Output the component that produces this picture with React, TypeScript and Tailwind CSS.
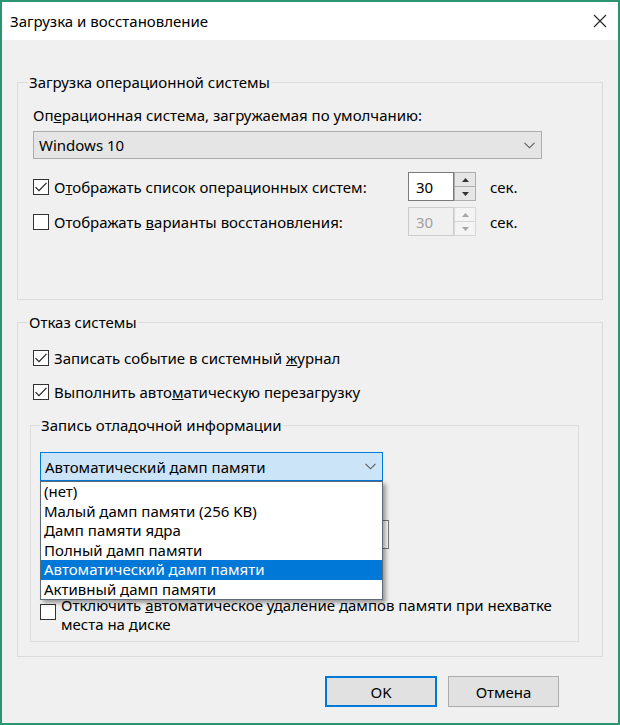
import { ReactNode } from 'react'

const font = { fontFamily: '"Noto Sans", "Open Sans", sans-serif' }

function Chevron() {
  return (
    <svg width="11" height="7" viewBox="0 0 11 7" className="shrink-0">
      <path d="M0.5 0.8 L5.5 5.8 L10.5 0.8" fill="none" stroke="#5a5a5a" strokeWidth="1.1" />
    </svg>
  )
}

function Checkbox({ checked }: { checked?: boolean }) {
  return (
    <span className="w-[16px] h-[16px] shrink-0 border border-[#333] bg-white flex items-center justify-center">
      {checked && (
        <svg width="14" height="14" viewBox="0 0 14 14">
          <path d="M1.5 7.2 L5 10.7 L12.5 2.8" fill="none" stroke="#222" strokeWidth="1.2" />
        </svg>
      )}
    </span>
  )
}

function Spinner({ disabled }: { disabled?: boolean }) {
  const arrow = disabled ? '#a6a6a6' : '#333'
  return (
    <div className="flex h-[29px]">
      <div
        className={
          disabled
            ? 'w-[46px] border border-[#cccccc] bg-[#f0f0f0] text-[#a0a0a0] pl-[7px] flex items-center'
            : 'w-[46px] border border-[#7a7a7a] bg-white text-black pl-[7px] flex items-center'
        }
      >
        30
      </div>
      <div className="w-[22px] flex flex-col">
        <div
          className={
            disabled
              ? 'flex-1 border border-[#d6d6d6] border-b-0 flex items-center justify-center bg-[#f4f4f4]'
              : 'flex-1 border border-[#adadad] border-b-0 flex items-center justify-center bg-[#e6e6e6]'
          }
        >
          <svg width="7" height="4" viewBox="0 0 7 4">
            <path d="M0 4 L3.5 0 L7 4 Z" fill={arrow} />
          </svg>
        </div>
        <div
          className={
            disabled
              ? 'flex-1 border border-[#d6d6d6] flex items-center justify-center bg-[#f4f4f4]'
              : 'flex-1 border border-[#adadad] flex items-center justify-center bg-[#e6e6e6]'
          }
        >
          <svg width="7" height="4" viewBox="0 0 7 4">
            <path d="M0 0 L3.5 4 L7 0 Z" fill={arrow} />
          </svg>
        </div>
      </div>
    </div>
  )
}

function CheckRow({ checked, children }: { checked?: boolean; children: ReactNode }) {
  return (
    <div className="flex items-center gap-[5px] h-[20px]">
      <Checkbox checked={checked} />
      <span>{children}</span>
    </div>
  )
}

const dumpOptions = [
  '(нет)',
  'Малый дамп памяти (256 KB)',
  'Дамп памяти ядра',
  'Полный дамп памяти',
  'Автоматический дамп памяти',
  'Активный дамп памяти',
]

export default function App() {
  return (
    <div
      style={font}
      className="w-[620px] h-[725px] border-2 border-[#2a9570] bg-[#f0f0f0] flex flex-col text-[15px] leading-[20px] text-black overflow-hidden"
    >
      <div className="h-[38px] bg-white flex items-center justify-between pl-[8px] pr-[11px] shrink-0">
        <span className="text-[15px]">Загрузка и восстановление</span>
        <svg width="14" height="14" viewBox="0 0 14 14">
          <path d="M1 1 L13 13 M13 1 L1 13" stroke="#222" strokeWidth="1.1" />
        </svg>
      </div>

      <div className="flex flex-col px-[15px]">
        <fieldset className="mt-[32px] border border-[#dcdcdc] pl-[10px] pr-[16px] pb-[63px]">
          <legend className="px-[1px]">Загрузка операционной системы</legend>
          <div className="pl-[5px]">
            <div className="mt-[13px]">
              Оп<u>е</u>рационная система, загружаемая по умолчанию:
            </div>
            <div className="mt-[6px] w-[509px] h-[28px] border border-[#adadad] bg-[#e5e5e5] flex items-center justify-between pl-[5px] pr-[6px]">
              <span>Windows 10</span>
              <Chevron />
            </div>
            <div className="mt-[13px] flex items-center">
              <div className="w-[375px]">
                <CheckRow checked>
                  О<u>т</u>ображать список операционных систем:
                </CheckRow>
              </div>
              <Spinner />
              <span className="ml-[14px]">сек.</span>
            </div>
            <div className="mt-[6px] flex items-center">
              <div className="w-[375px]">
                <CheckRow>
                  Отображать <u>в</u>арианты восстановления:
                </CheckRow>
              </div>
              <Spinner disabled />
              <span className="ml-[14px]">сек.</span>
            </div>
          </div>
        </fieldset>

        <fieldset className="mt-[12px] border border-[#dcdcdc] pl-[10px] pr-[23px] pb-[14px]">
          <legend className="px-[1px]">Отказ системы</legend>
          <div className="pl-[5px] mt-[16px]">
            <CheckRow checked>
              Записать событие в системный <u>ж</u>урнал
            </CheckRow>
          </div>
          <div className="pl-[5px] mt-[14px]">
            <CheckRow checked>
              Выполнить авто<u>м</u>атическую перезагрузку
            </CheckRow>
          </div>

          <fieldset className="mt-[13px] ml-[2px] border border-[#dcdcdc] pl-[9px] pr-[8px] pb-[7px]">
            <legend className="px-[1px]">Запись отладочной информации</legend>
            <div className="relative mt-[17px] w-[343px]">
              <div className="h-[29px] border border-[#0078d7] bg-[#cce4f7] flex items-center justify-between pl-[4px] pr-[6px]">
                <span>Автоматический дамп памяти</span>
                <Chevron />
              </div>
              <div className="absolute left-0 top-[29px] w-[343px] z-10 bg-white border border-[#5f6a78] shadow-[3px_3px_4px_rgba(0,0,0,0.35)]">
                {dumpOptions.map((o) => (
                  <div
                    key={o}
                    className={
                      o === 'Автоматический дамп памяти'
                        ? 'h-[19.5px] leading-[19.5px] pl-[3px] bg-[#0078d7] text-white'
                        : 'h-[19.5px] leading-[19.5px] pl-[3px]'
                    }
                  >
                    {o}
                  </div>
                ))}
              </div>
            </div>
            <div className="mt-[10px] h-[19px]" />
            <div className="mt-[10px] w-[349px] h-[29px] border border-[#7a7a7a] bg-white" />
            <div className="mt-[47px] flex items-start gap-[5px]">
              <span className="mt-[8px]">
                <Checkbox />
              </span>
              <span className="leading-[19px]">
                Отключить <u>а</u>втоматическое удаление дампов памяти при нехватке
                <br />
                места на диске
              </span>
            </div>
          </fieldset>
        </fieldset>

        <div className="mt-[19px] flex justify-end gap-[11px] pr-[44px]">
          <button className="w-[112px] h-[31px] bg-[#e1e1e1] border-2 border-[#0078d7]">OK</button>
          <button className="w-[111px] h-[31px] bg-[#e1e1e1] border border-[#adadad]">Отмена</button>
        </div>
      </div>
    </div>
  )
}
